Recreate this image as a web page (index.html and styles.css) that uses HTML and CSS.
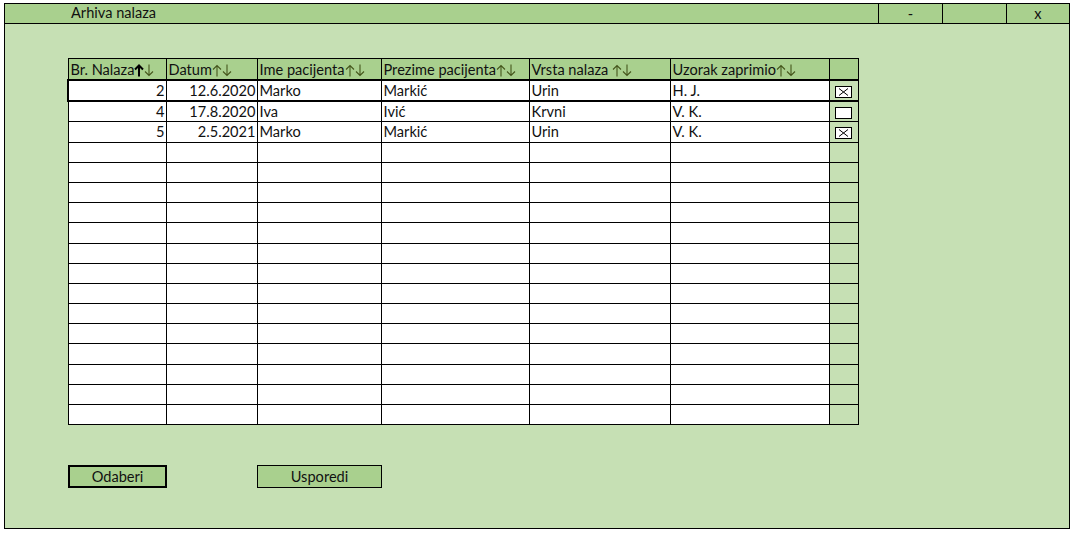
FILE: index.html
```html
<!DOCTYPE html>
<html>
<head>
<meta charset="utf-8">
<link rel="stylesheet" href="styles.css">
</head>
<body>
<div class="window">
  <div class="titlebar">
    <div class="title">Arhiva nalaza</div>
    <div class="tbtn">-</div>
    <div class="tbtn"></div>
    <div class="tbtn">x</div>
  </div>
  <div class="content">
    <table class="grid">
      <colgroup>
        <col class="c1"><col class="c2"><col class="c3"><col class="c4"><col class="c5"><col class="c6"><col class="c7">
      </colgroup>
      <thead>
        <tr>
          <th>Br. Nalaza<svg class="ar strong" width="10" height="13" viewBox="0 0 10 13"><path d="M5 12.5V1.5M1 5.5L5 1.5L9 5.5"/></svg><svg class="ar" width="10" height="13" viewBox="0 0 10 13"><path d="M5 0.5V11.5M1 7.5L5 11.5L9 7.5"/></svg></th>
          <th>Datum<svg class="ar" width="10" height="13" viewBox="0 0 10 13"><path d="M5 12.5V1.5M1 5.5L5 1.5L9 5.5"/></svg><svg class="ar" width="10" height="13" viewBox="0 0 10 13"><path d="M5 0.5V11.5M1 7.5L5 11.5L9 7.5"/></svg></th>
          <th>Ime pacijenta<svg class="ar" width="10" height="13" viewBox="0 0 10 13"><path d="M5 12.5V1.5M1 5.5L5 1.5L9 5.5"/></svg><svg class="ar" width="10" height="13" viewBox="0 0 10 13"><path d="M5 0.5V11.5M1 7.5L5 11.5L9 7.5"/></svg></th>
          <th>Prezime pacijenta<svg class="ar" width="10" height="13" viewBox="0 0 10 13"><path d="M5 12.5V1.5M1 5.5L5 1.5L9 5.5"/></svg><svg class="ar" width="10" height="13" viewBox="0 0 10 13"><path d="M5 0.5V11.5M1 7.5L5 11.5L9 7.5"/></svg></th>
          <th>Vrsta nalaza <svg class="ar" width="10" height="13" viewBox="0 0 10 13"><path d="M5 12.5V1.5M1 5.5L5 1.5L9 5.5"/></svg><svg class="ar" width="10" height="13" viewBox="0 0 10 13"><path d="M5 0.5V11.5M1 7.5L5 11.5L9 7.5"/></svg></th>
          <th>Uzorak zaprimio<svg class="ar" width="10" height="13" viewBox="0 0 10 13"><path d="M5 12.5V1.5M1 5.5L5 1.5L9 5.5"/></svg><svg class="ar" width="10" height="13" viewBox="0 0 10 13"><path d="M5 0.5V11.5M1 7.5L5 11.5L9 7.5"/></svg></th>
          <th class="chk"></th>
        </tr>
      </thead>
      <tbody>
        <tr class="sel">
          <td class="num">2</td><td class="num">12.6.2020</td><td>Marko</td><td>Markić</td><td>Urin</td><td>H. J.</td>
          <td class="chk"><span class="box"><svg width="15" height="10" viewBox="0 0 15 10"><path d="M3 1.5 L12 8.5 M12 1.5 L3 8.5" stroke="#000" stroke-width="1" fill="none"/></svg></span></td>
        </tr>
        <tr>
          <td class="num">4</td><td class="num">17.8.2020</td><td>Iva</td><td>Ivić</td><td>Krvni</td><td>V. K.</td>
          <td class="chk"><span class="box"></span></td>
        </tr>
        <tr>
          <td class="num">5</td><td class="num">2.5.2021</td><td>Marko</td><td>Markić</td><td>Urin</td><td>V. K.</td>
          <td class="chk"><span class="box"><svg width="15" height="10" viewBox="0 0 15 10"><path d="M3 1.5 L12 8.5 M12 1.5 L3 8.5" stroke="#000" stroke-width="1" fill="none"/></svg></span></td>
        </tr>
        <tr><td></td><td></td><td></td><td></td><td></td><td></td><td class="chk"></td></tr>
        <tr><td></td><td></td><td></td><td></td><td></td><td></td><td class="chk"></td></tr>
        <tr><td></td><td></td><td></td><td></td><td></td><td></td><td class="chk"></td></tr>
        <tr><td></td><td></td><td></td><td></td><td></td><td></td><td class="chk"></td></tr>
        <tr><td></td><td></td><td></td><td></td><td></td><td></td><td class="chk"></td></tr>
        <tr><td></td><td></td><td></td><td></td><td></td><td></td><td class="chk"></td></tr>
        <tr><td></td><td></td><td></td><td></td><td></td><td></td><td class="chk"></td></tr>
        <tr><td></td><td></td><td></td><td></td><td></td><td></td><td class="chk"></td></tr>
        <tr><td></td><td></td><td></td><td></td><td></td><td></td><td class="chk"></td></tr>
        <tr><td></td><td></td><td></td><td></td><td></td><td></td><td class="chk"></td></tr>
        <tr><td></td><td></td><td></td><td></td><td></td><td></td><td class="chk"></td></tr>
        <tr><td></td><td></td><td></td><td></td><td></td><td></td><td class="chk"></td></tr>
        <tr><td></td><td></td><td></td><td></td><td></td><td></td><td class="chk"></td></tr>
        <tr><td></td><td></td><td></td><td></td><td></td><td></td><td class="chk"></td></tr>
      </tbody>
    </table>
    <div class="buttons">
      <div class="btn btn-primary">Odaberi</div>
      <div class="btn btn-second">Usporedi</div>
    </div>
  </div>
</div>
</body>
</html>
```

FILE: styles.css
```css
html, body {
  margin: 0;
  padding: 0;
  background: #ffffff;
}
body {
  font-family: Lato, "Liberation Sans", sans-serif;
  font-size: 14.6px;
  color: #111;
}
.window {
  margin: 3px 0 0 4px;
  width: 1064px;
  height: 524px;
  border: 1px solid #000;
  background: #c6e0b4;
}
.titlebar {
  display: grid;
  grid-template-columns: 873px 64px 64px 63px;
  height: 19px;
  border-bottom: 1px solid #000;
  background: #a9d08e;
}
.title {
  padding-left: 66px;
  line-height: 18px;
}
.tbtn {
  border-left: 1px solid #000;
  text-align: center;
  line-height: 19px;
}
.content {
  padding: 34px 0 0 62px;
}
.grid {
  border-collapse: collapse;
  table-layout: fixed;
  width: 790px;
}
.c1 { width: 98px; }
.c2 { width: 91px; }
.c3 { width: 124px; }
.c4 { width: 148px; }
.c5 { width: 141px; }
.c6 { width: 159px; }
.c7 { width: 29px; }
.grid th, .grid td {
  border: 1px solid #000;
  padding: 1px 2px 0 2px;
  white-space: nowrap;
  overflow: hidden;
  font-weight: normal;
  text-align: left;
}
.grid th {
  background: #a9d08e;
  height: 19px;
  border-bottom: 2px solid #000;
  line-height: 18px;
}
.grid td {
  background: #fff;
  height: 18.2px;
  line-height: 18px;
}
.grid td.num {
  text-align: right;
  padding-right: 1px;
}
.grid .chk {
  background: #c6e0b4;
  text-align: center;
  padding: 0;
  height: 19.2px;
}
.grid thead .chk {
  background: #a9d08e;
  height: 20px;
}
.grid tr.sel td {
  border-top: 2px solid #000;
  border-bottom: 2px solid #000;
}
.grid tr.sel td:first-child {
  border-left: 2px solid #000;
}
.ar {
  display: inline-block;
  vertical-align: -2px;
  fill: none;
  stroke: #45561c;
  stroke-width: 1.1;
}
.ar.strong {
  stroke: #000;
  stroke-width: 2;
}
.box {
  display: inline-block;
  width: 15px;
  height: 10px;
  border: 1px solid #000;
  background: #fff;
  vertical-align: middle;
  line-height: 0;
}
.box svg {
  display: block;
}
.buttons {
  display: flex;
  margin: 40px 0 0 1px;
}
.btn {
  background: #a9d08e;
  text-align: center;
  box-sizing: border-box;
  height: 23px;
  line-height: 19px;
}
.btn-primary {
  width: 99px;
  border: 2px solid #000;
}
.btn-second {
  margin-left: 90px;
  width: 125px;
  border: 1px solid #000;
  line-height: 21px;
}
```
